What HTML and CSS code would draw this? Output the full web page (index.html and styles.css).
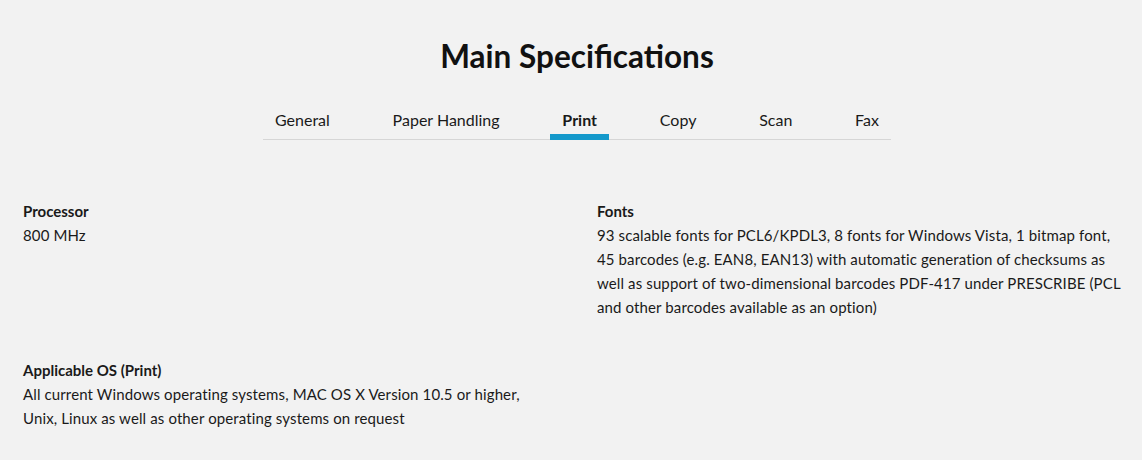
FILE: index.html
```html
<!DOCTYPE html>
<html lang="en">
<head>
<meta charset="utf-8">
<title>Main Specifications</title>
<link rel="stylesheet" href="styles.css">
</head>
<body>
<main class="specs">
  <h1 class="specs-title">Main Specifications</h1>
  <nav class="tabs">
    <ul class="tab-list">
      <li class="tab">General</li>
      <li class="tab">Paper Handling</li>
      <li class="tab tab-active">Print</li>
      <li class="tab">Copy</li>
      <li class="tab">Scan</li>
      <li class="tab">Fax</li>
    </ul>
  </nav>
  <section class="spec-grid">
    <div class="spec">
      <h3 class="spec-label">Processor</h3>
      <p class="spec-value">800 MHz</p>
    </div>
    <div class="spec">
      <h3 class="spec-label">Fonts</h3>
      <p class="spec-value">93 scalable fonts for PCL6/KPDL3, 8 fonts for Windows Vista, 1 bitmap font, 45 barcodes (e.g. EAN8, EAN13) with automatic generation of checksums as well as support of two-dimensional barcodes PDF-417 under PRESCRIBE (PCL and other barcodes available as an option)</p>
    </div>
    <div class="spec">
      <h3 class="spec-label">Applicable OS (Print)</h3>
      <p class="spec-value">All current Windows operating systems, MAC OS X Version 10.5 or higher, Unix, Linux as well as other operating systems on request</p>
    </div>
  </section>
</main>
</body>
</html>
```
FILE: styles.css
```css
html, body {
  margin: 0;
  padding: 0;
  background: #f2f2f2;
}
body {
  font-family: "Lato", "Liberation Sans", sans-serif;
  color: #1a1a1a;
}
.specs {
  padding: 34px 11px 0 23px;
}
.specs-title {
  margin: 0;
  text-align: center;
  font-size: 31.5px;
  line-height: 44px;
  font-weight: 700;
  color: #111;
}
.tabs {
  display: flex;
  justify-content: center;
  margin-top: 32px;
}
.tab-list {
  list-style: none;
  margin: 0;
  padding: 0;
  display: flex;
  border-bottom: 1px solid #d6d6d6;
  width: 628px;
  justify-content: space-between;
}
.tab {
  font-size: 16px;
  line-height: 20px;
  white-space: nowrap;
  padding: 0 12px 4px;
  border-bottom: 6px solid transparent;
  margin-bottom: -1px;
}
.tab-active {
  font-weight: 700;
  border-bottom-color: #1499cb;
}
.spec-grid {
  display: grid;
  grid-template-columns: 1fr 1fr;
  column-gap: 40px;
  row-gap: 39px;
  margin-top: 59px;
}
.spec-label {
  margin: 0;
  font-size: 15px;
  line-height: 24px;
  font-weight: 700;
}
.spec-value {
  margin: 0;
  font-size: 15px;
  line-height: 24px;
  letter-spacing: 0.12px;
}
```
